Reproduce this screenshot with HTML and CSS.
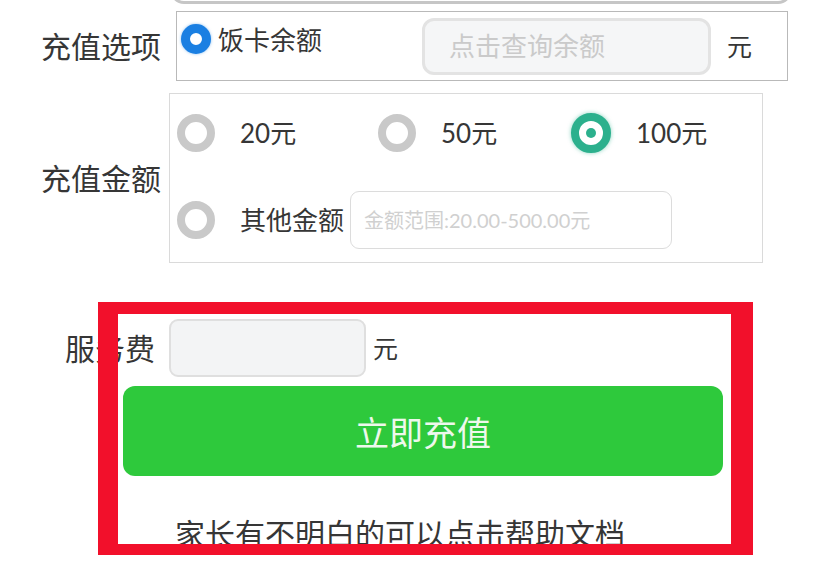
FILE: index.html
```
<!DOCTYPE html>
<html lang="zh-CN">
<head>
<meta charset="utf-8">
<title>充值</title>
<link rel="stylesheet" href="styles.css">
</head>
<body>
<div class="page">
  <div class="top-box"></div>

  <div class="row row-option">
    <div class="label">充值选项</div>
    <div class="box box-option">
      <div class="choice choice-card">
        <span class="radio radio-blue"></span>
        <span class="choice-text">饭卡余额</span>
      </div>
      <div class="input input-balance"><span class="ph">点击查询余额</span></div>
      <span class="unit">元</span>
    </div>
  </div>

  <div class="row row-amount">
    <div class="label">充值金额</div>
    <div class="box box-amount">
      <div class="amount-line">
        <div class="amt amt-1"><span class="radio radio-gray"></span><span class="amt-text">20元</span></div>
        <div class="amt amt-2"><span class="radio radio-gray"></span><span class="amt-text">50元</span></div>
        <div class="amt amt-3"><span class="radio radio-teal"><span class="dot"></span></span><span class="amt-text">100元</span></div>
      </div>
      <div class="amount-line amount-other">
        <span class="radio radio-gray"></span>
        <span class="amt-text">其他金额</span>
        <div class="input input-other"><span class="ph ph-small">金额范围:20.00-500.00元</span></div>
      </div>
    </div>
  </div>

  <div class="row row-fee">
    <div class="label label-fee">服务费</div>
    <div class="input input-fee"></div>
    <span class="unit unit-fee">元</span>
  </div>

  <div class="pay-btn">立即充值</div>

  <div class="help">家长有不明白的可以点击帮助文档</div>

  <div class="red-mark"></div>
</div>
</body>
</html>
```

FILE: styles.css
```
html, body {
  margin: 0;
  padding: 0;
  background: #ffffff;
}

body {
  font-family: "Lato", "Noto Sans CJK SC", sans-serif;
  color: #363636;
}

.page {
  position: relative;
  display: flow-root;
  width: 827px;
  height: 574px;
  overflow: hidden;
}

.top-box {
  box-sizing: border-box;
  margin: -40px 0 0 170px;
  width: 622px;
  height: 44px;
  border: 3px solid #c6c6c6;
  border-radius: 0 0 14px 14px;
}

.row {
  display: flex;
  align-items: center;
}

.label {
  width: 161px;
  text-align: right;
  font-size: 30px;
  line-height: 36px;
  flex: none;
}

.label-fee {
  padding-right: 6px;
  box-sizing: border-box;
}

.box {
  box-sizing: border-box;
  flex: none;
}

/* row 1 */
.row-option {
  margin-top: 7px;
}

.box-option {
  margin-left: 15px;
  width: 612px;
  height: 70px;
  border: 1px solid #b9b9b9;
  display: flex;
  align-items: center;
}

.choice-card {
  align-self: flex-start;
  margin-top: 10px;
  margin-left: 4px;
  display: flex;
  align-items: center;
  gap: 7px;
}

.choice-text {
  font-size: 26px;
  line-height: 30px;
  margin-top: 3px;
}

.radio {
  box-sizing: border-box;
  display: inline-flex;
  align-items: center;
  justify-content: center;
  border-radius: 50%;
  background: #fff;
  flex: none;
}

.radio-blue {
  width: 30px;
  height: 30px;
  border: 9px solid #1a7fe2;
  box-shadow: 0 0 3px rgba(26, 127, 226, 0.5);
}

.radio-gray {
  width: 38px;
  height: 38px;
  border: 8px solid #c9c9c9;
}

.radio-teal {
  width: 40px;
  height: 40px;
  border: 8px solid #2cb08d;
  box-shadow: 0 0 4px rgba(44, 176, 141, 0.55);
}

.radio-teal .dot {
  width: 10px;
  height: 10px;
  border-radius: 50%;
  background: #2cb08d;
}

.input {
  box-sizing: border-box;
  display: flex;
  align-items: center;
  flex: none;
}

.input-balance {
  margin-left: 100px;
  width: 289px;
  height: 57px;
  border: 3px solid #e3e3e3;
  border-radius: 12px;
  background: #f5f6f7;
  padding-left: 24px;
}

.ph {
  color: #cacaca;
  font-size: 26px;
  line-height: 30px;
}

.ph-small {
  font-size: 20px;
  color: #d0d0d0;
}

.unit {
  font-size: 25px;
  line-height: 30px;
  margin-left: 16px;
}

/* row 2 */
.row-amount {
  margin-top: 12px;
}

.box-amount {
  margin-left: 8px;
  width: 594px;
  height: 170px;
  border: 1px solid #dadada;
  padding: 19px 0 0 7px;
}

.amount-line {
  display: flex;
  align-items: center;
}

.amt {
  display: flex;
  align-items: center;
  gap: 25px;
}

.amt-1 { width: 201px; }
.amt-2 { width: 193px; }
.amt-3 { gap: 25px; }

.amt-text {
  font-size: 26px;
  line-height: 30px;
}

.amount-other {
  margin-top: 38px;
}

.amount-other .amt-text {
  margin-left: 25px;
}

.input-other {
  margin-left: 6px;
  width: 322px;
  height: 58px;
  border: 1.5px solid #dcdcdc;
  border-radius: 9px;
  background: #fff;
  padding-left: 13px;
}

/* row 3 */
.row-fee {
  margin-top: 56px;
}

.input-fee {
  margin-left: 8px;
  width: 197px;
  height: 58px;
  border: 2px solid #dfdfdf;
  border-radius: 9px;
  background: #f3f4f5;
}

.unit-fee {
  margin-left: 7px;
}

.pay-btn {
  margin: 9px 0 0 123px;
  width: 600px;
  height: 90px;
  border-radius: 12px;
  background: #2ec93c;
  color: #eef8ec;
  font-size: 34px;
  display: flex;
  align-items: center;
  justify-content: center;
  font-family: "Noto Sans CJK SC", sans-serif;
}

.help {
  margin: 38px 0 0 175px;
  font-size: 30px;
  line-height: 36px;
  font-family: "Noto Sans CJK SC", sans-serif;
}

.red-mark {
  position: absolute;
  left: 98px;
  top: 302px;
  width: 655px;
  height: 253px;
  box-sizing: border-box;
  border-style: solid;
  border-color: #f2102b;
  border-width: 12px 22px 11px 20px;
  filter: blur(0.5px);
}
```
